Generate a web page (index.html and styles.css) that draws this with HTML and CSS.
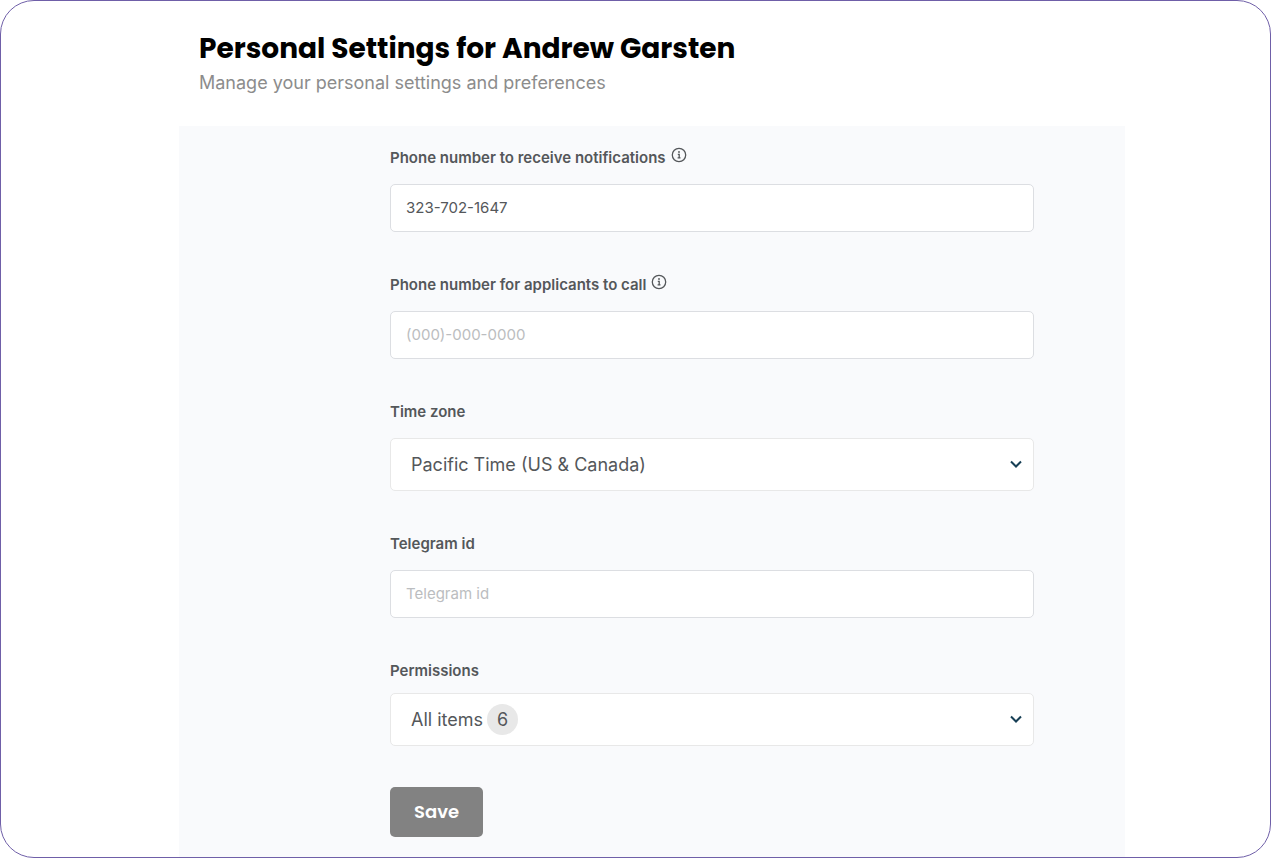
FILE: index.html
```
<!DOCTYPE html>
<html lang="en">
<head>
    <meta charset="UTF-8">
    <meta name="viewport" content="width=device-width, initial-scale=1.0">
    <title>Personal Settings</title>
    <link rel="stylesheet" href="styles.css">
</head>
<body>
    <main class="page">
        <header class="page-header">
            <h1>Personal Settings for Andrew Garsten</h1>
            <p>Manage your personal settings and preferences</p>
        </header>

        <form class="settings-form">
            <div class="field">
                <div class="field-label">
                    <label for="notifyPhone">Phone number to receive notifications</label>
                    <svg class="info-icon" viewBox="0 0 16 16" aria-hidden="true">
                        <circle cx="8" cy="8" r="6.7"/>
                        <path d="M6.8 7.3H8.2V10.8M6.6 10.9H9.5"/>
                        <circle class="dot" cx="8" cy="5" r="0.9"/>
                    </svg>
                </div>
                <input type="tel" id="notifyPhone" value="323-702-1647">
            </div>

            <div class="field">
                <div class="field-label">
                    <label for="applicantPhone">Phone number for applicants to call</label>
                    <svg class="info-icon" viewBox="0 0 16 16" aria-hidden="true">
                        <circle cx="8" cy="8" r="6.7"/>
                        <path d="M6.8 7.3H8.2V10.8M6.6 10.9H9.5"/>
                        <circle class="dot" cx="8" cy="5" r="0.9"/>
                    </svg>
                </div>
                <input type="tel" id="applicantPhone" placeholder="(000)-000-0000">
            </div>

            <div class="field">
                <div class="field-label">
                    <label for="timeZone">Time zone</label>
                </div>
                <div class="select-wrap">
                    <select id="timeZone">
                        <option>Pacific Time (US &amp; Canada)</option>
                    </select>
                    <svg class="chevron" viewBox="0 0 12 8" aria-hidden="true"><path d="M1 1.5L6 6.5L11 1.5"/></svg>
                </div>
            </div>

            <div class="field">
                <div class="field-label">
                    <label for="telegramId">Telegram id</label>
                </div>
                <input type="text" id="telegramId" placeholder="Telegram id">
            </div>

            <div class="field field-compact">
                <div class="field-label">
                    <label for="permissions">Permissions</label>
                </div>
                <div class="select-wrap">
                    <select id="permissions">
                        <option>All items</option>
                    </select>
                    <span class="count">6</span>
                    <svg class="chevron" viewBox="0 0 12 8" aria-hidden="true"><path d="M1 1.5L6 6.5L11 1.5"/></svg>
                </div>
            </div>

            <button type="submit" class="save">Save</button>
        </form>
    </main>
</body>
</html>
```
FILE: styles.css
```
* {
    box-sizing: border-box;
}
body {
    margin: 0;
    font-family: Inter, "Liberation Sans", sans-serif;
    color: #54575a;
    background-color: #fff;
}
.page {
    display: flex;
    flex-direction: column;
    min-height: 100vh;
    padding: 28px 145px 0 178px;
    border: 1px solid #6f5fa8;
    border-radius: 34px;
}
.page-header {
    padding: 0 20px;
    margin-bottom: 29px;
}
h1 {
    margin: 0;
    font-family: Poppins, Inter, sans-serif;
    font-size: 28px;
    font-weight: 700;
    line-height: 40px;
    color: #000;
}
.page-header p {
    margin: 0;
    font-size: 18px;
    line-height: 28px;
    color: #8c8c8c;
}
.settings-form {
    flex: 1;
    display: flex;
    flex-direction: column;
    gap: 41px;
    padding: 20px 91px 16px 211px;
    background-color: #f9fafc;
}
.field {
    display: flex;
    flex-direction: column;
    gap: 14px;
}
.field-compact {
    gap: 10px;
}
.field-label {
    display: flex;
    gap: 5px;
    font-size: 15px;
    font-weight: 600;
    line-height: 24px;
}
.info-icon {
    width: 16px;
    height: 16px;
    margin-top: 1px;
    fill: none;
    stroke: #54575a;
    stroke-width: 1.3;
}
.info-icon .dot {
    fill: #54575a;
    stroke: none;
}
input, select {
    width: 100%;
    font-family: inherit;
    color: #54575a;
    background-color: #fff;
    border: 1px solid #dcdee2;
    border-radius: 5px;
}
input {
    height: 48px;
    padding: 0 15px 2px;
    font-size: 15px;
}
input::placeholder {
    color: #bbbdc0;
}
.select-wrap {
    position: relative;
}
select {
    display: block;
    height: 53px;
    padding: 0 36px 0 20px;
    font-size: 18px;
    border-color: #e8e8e8;
    appearance: none;
}
.chevron {
    position: absolute;
    top: 22px;
    right: 12px;
    width: 12px;
    height: 8px;
    fill: none;
    stroke: #173f55;
    stroke-width: 2;
    pointer-events: none;
}
.count {
    position: absolute;
    top: 11px;
    left: 97px;
    width: 31px;
    height: 31px;
    border-radius: 50%;
    font-size: 18px;
    line-height: 31px;
    text-align: center;
    background-color: #e8e8e8;
    pointer-events: none;
}
.save {
    align-self: flex-start;
    padding: 0 24px;
    font-family: Poppins, Inter, sans-serif;
    font-size: 18px;
    font-weight: 600;
    line-height: 50px;
    color: #fff;
    background-color: #828282;
    border: none;
    border-radius: 5px;
    cursor: pointer;
}
```
